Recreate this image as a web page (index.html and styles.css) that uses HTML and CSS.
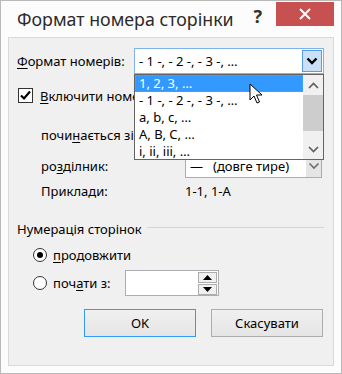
FILE: index.html
```html
<!DOCTYPE html>
<html lang="uk">
<head>
    <meta charset="UTF-8">
    <title>Формат номера сторінки</title>
    <link rel="stylesheet" href="styles.css">
</head>
<body>
    <div class="window">
        <div class="titlebar">
            <span class="title">Формат номера сторінки</span>
            <span class="help">?</span>
            <span class="close">
                <svg width="12" height="12" viewBox="0 0 12 12"><path d="M1 1 L11 11 M11 1 L1 11" stroke="#fff" stroke-width="2"/></svg>
            </span>
        </div>
        <div class="panel">
            <div class="row row-format">
                <span class="label"><u>Ф</u>ормат номерів:</span>
                <div class="combo combo-main">
                    <span class="combo-text">- 1 -, - 2 -, - 3 -, …</span>
                    <span class="combo-btn">
                        <svg width="12" height="8" viewBox="0 0 12 8"><path d="M1.5 1.5 L6 6 L10.5 1.5" fill="none" stroke="#000" stroke-width="2.4"/></svg>
                    </span>
                </div>
            </div>

            <div class="row row-check">
                <span class="checkbox">
                    <svg width="13" height="13" viewBox="0 0 13 13"><path d="M2 6.5 L5 9.5 L11 2.5" fill="none" stroke="#000" stroke-width="2.2"/></svg>
                </span>
                <span class="label"><u>В</u>ключити номер глави</span>
            </div>

            <div class="sub">
                <div class="sub-row row-start">
                    <span class="label">почи<u>н</u>ається зі стилю</span>
                </div>
                <div class="sub-row row-sep">
                    <span class="label sub-label">ро<u>з</u>ділник:</span>
                    <div class="combo combo-sep">
                        <span class="combo-text"><span class="dash">—</span>(довге тире)</span>
                        <span class="combo-btn grey">
                            <svg width="12" height="8" viewBox="0 0 12 8"><path d="M1.5 1.5 L6 6 L10.5 1.5" fill="none" stroke="#6d6d6d" stroke-width="1.6"/></svg>
                        </span>
                    </div>
                </div>
                <div class="sub-row row-example">
                    <span class="label sub-label">Приклади:</span>
                    <span class="label">1-1, 1-А</span>
                </div>
            </div>

            <div class="group">
                <span class="group-title">Нумерація сторінок</span>
                <span class="group-line"></span>
            </div>

            <div class="radios">
                <div class="radio-row">
                    <span class="radio checked"></span>
                    <span class="label"><u>п</u>родовжити</span>
                </div>
                <div class="radio-row">
                    <span class="radio"></span>
                    <span class="label start-label">поч<u>а</u>ти з:</span>
                    <div class="spin">
                        <span class="spin-field"></span>
                        <span class="spin-btns">
                            <span class="spin-btn"><svg width="9" height="5" viewBox="0 0 9 5"><path d="M0 5 L4.5 0 L9 5 Z" fill="#000"/></svg></span>
                            <span class="spin-btn"><svg width="9" height="5" viewBox="0 0 9 5"><path d="M0 0 L4.5 5 L9 0 Z" fill="#000"/></svg></span>
                        </span>
                    </div>
                </div>
            </div>

            <div class="buttons">
                <button class="btn btn-ok">OK</button>
                <button class="btn">Скасувати</button>
            </div>

            <!-- відкритий список -->
            <div class="dropdown">
                <ul class="options">
                    <li class="selected">1, 2, 3, …</li>
                    <li>- 1 -, - 2 -, - 3 -, …</li>
                    <li>a, b, c, …</li>
                    <li>A, B, C, …</li>
                    <li>i, ii, iii, …</li>
                </ul>
                <div class="scrollbar">
                    <span class="scroll-arrow">
                        <svg width="11" height="7" viewBox="0 0 11 7"><path d="M1 6 L5.5 1.5 L10 6" fill="none" stroke="#606060" stroke-width="1.7"/></svg>
                    </span>
                    <span class="scroll-thumb"></span>
                    <span class="scroll-track"></span>
                    <span class="scroll-arrow">
                        <svg width="11" height="7" viewBox="0 0 11 7"><path d="M1 1 L5.5 5.5 L10 1" fill="none" stroke="#606060" stroke-width="1.7"/></svg>
                    </span>
                </div>
            </div>

            <svg class="cursor" width="14" height="22" viewBox="0 0 14 22">
                <path d="M1 1 L1 17 L5 13 L8 20 L10.5 19 L7.5 12 L13 12 Z" fill="#fff" stroke="#000" stroke-width="1"/>
            </svg>
        </div>
    </div>
</body>
</html>
```

FILE: styles.css
```css
body {
    margin: 0;
    font-family: "Noto Sans", "Open Sans", sans-serif;
    font-size: 13px;
    color: #000;
    background: #fff;
}
u {
    text-decoration: underline;
    text-underline-offset: 2px;
}
.window {
    width: 342px;
    height: 374px;
    box-sizing: border-box;
    border: 1px solid #b9b9b9;
    background: #fcfcfc;
    padding: 0 7px 7px 7px;
    display: flex;
    flex-direction: column;
}
.titlebar {
    height: 36px;
    display: flex;
    align-items: flex-start;
    margin-right: -7px;
}
.title {
    font-size: 17.8px;
    color: #2b2b2b;
    margin: 6px 0 0 9px;
    flex: 1;
}
.help {
    font-size: 18px;
    font-weight: bold;
    color: #333;
    margin: 3px 14px 0 0;
}
.close {
    width: 58px;
    height: 24px;
    margin: 1px 7px 0 0;
    background: #c75050;
    display: flex;
    align-items: center;
    justify-content: center;
}
.panel {
    flex: 1;
    position: relative;
    background: #f0f0f0;
    border: 1px solid #d9d9d9;
    padding: 10px 0 0 8px;
}
.row {
    display: flex;
    align-items: center;
}
.row-format {
    height: 26px;
}
.row-format .label {
    width: 117px;
}
.combo {
    box-sizing: border-box;
    height: 26px;
    background: #fff;
    border: 1px solid #abadb3;
    display: flex;
    align-items: center;
}
.combo-main {
    width: 190px;
    border-color: #7eb4ea;
}
.combo-text {
    flex: 1;
    padding-left: 4px;
    white-space: nowrap;
}
.combo-btn {
    width: 20px;
    height: 22px;
    margin-right: 1px;
    box-sizing: border-box;
    background: #c9e0f7;
    border: 1px solid #569de5;
    display: flex;
    align-items: center;
    justify-content: center;
}
.combo-btn.grey {
    width: 15px;
    height: 23px;
    margin-right: 0;
    background: #e5e5e5;
    border: none;
}
.row-check {
    margin-top: 14px;
    height: 15px;
}
.checkbox {
    box-sizing: border-box;
    width: 15px;
    height: 15px;
    margin-left: 1px;
    background: #fff;
    border: 1px solid #333;
    display: flex;
    align-items: center;
    justify-content: center;
    margin-right: 7px;
}
.sub {
    padding-left: 24px;
}
.sub-row {
    display: flex;
    align-items: center;
}
.row-start {
    margin-top: 23px;
    height: 18px;
}
.row-sep {
    margin-top: 9px;
    height: 25px;
}
.sub-label {
    width: 144px;
}
.combo-sep {
    width: 137px;
    height: 25px;
}
.dash {
    margin-right: 10px;
}
.row-example {
    margin-top: 4px;
    height: 18px;
}
.group {
    display: flex;
    align-items: center;
    margin-top: 18px;
    margin-right: 9px;
}
.group-title {
    margin-right: 5px;
    position: relative;
    top: 2px;
}
.group-line {
    flex: 1;
    border-top: 1px solid #d5d5d5;
}
.radios {
    padding-left: 16px;
    margin-top: 12px;
}
.radio-row {
    display: flex;
    align-items: center;
    height: 14px;
    margin-bottom: 14px;
}
.radio {
    box-sizing: border-box;
    width: 14px;
    height: 14px;
    border-radius: 50%;
    border: 1px solid #333;
    background: #fff;
    margin-right: 6px;
    display: flex;
    align-items: center;
    justify-content: center;
}
.radio.checked::after {
    content: "";
    width: 6px;
    height: 6px;
    border-radius: 50%;
    background: #000;
}
.start-label {
    width: 72px;
}
.spin {
    box-sizing: border-box;
    width: 94px;
    height: 26px;
    background: #fff;
    border: 1px solid #abadb3;
    display: flex;
    align-items: center;
    padding-right: 1px;
}
.spin-field {
    flex: 1;
}
.spin-btns {
    display: flex;
    flex-direction: column;
    gap: 1px;
}
.spin-btn {
    box-sizing: border-box;
    width: 19px;
    height: 11px;
    background: #f0f0f0;
    border: 1px solid #adadad;
    display: flex;
    align-items: center;
    justify-content: center;
}
.buttons {
    display: flex;
    justify-content: flex-end;
    gap: 15px;
    margin: 19px 10px 0 0;
}
.btn {
    box-sizing: border-box;
    width: 112px;
    height: 28px;
    font-family: inherit;
    font-size: 13px;
    color: #000;
    background: linear-gradient(#f0f0f0, #e5e5e5);
    border: 1px solid #adadad;
    border-radius: 0;
    padding: 0;
}
.btn-ok {
    border-color: #3399ff;
}
.dropdown {
    position: absolute;
    left: 125px;
    top: 36px;
    width: 190px;
    height: 86px;
    box-sizing: border-box;
    background: #fff;
    border: 1px solid #646464;
    display: flex;
}
.options {
    list-style: none;
    margin: 0;
    padding: 0;
    flex: 1;
}
.options li {
    height: 17px;
    line-height: 17px;
    padding-left: 4px;
    white-space: nowrap;
}
.options li.selected {
    background: #3399ff;
    color: #fff;
    outline: 1px dotted #d08a2d;
    outline-offset: -1px;
}
.scrollbar {
    width: 20px;
    background: #f0f0f0;
    display: flex;
    flex-direction: column;
}
.scroll-arrow {
    height: 20px;
    display: flex;
    align-items: center;
    justify-content: center;
}
.scroll-thumb {
    height: 36px;
    background: #cdcdcd;
}
.scroll-track {
    flex: 1;
}
.cursor {
    position: absolute;
    left: 240px;
    top: 45px;
}
```
